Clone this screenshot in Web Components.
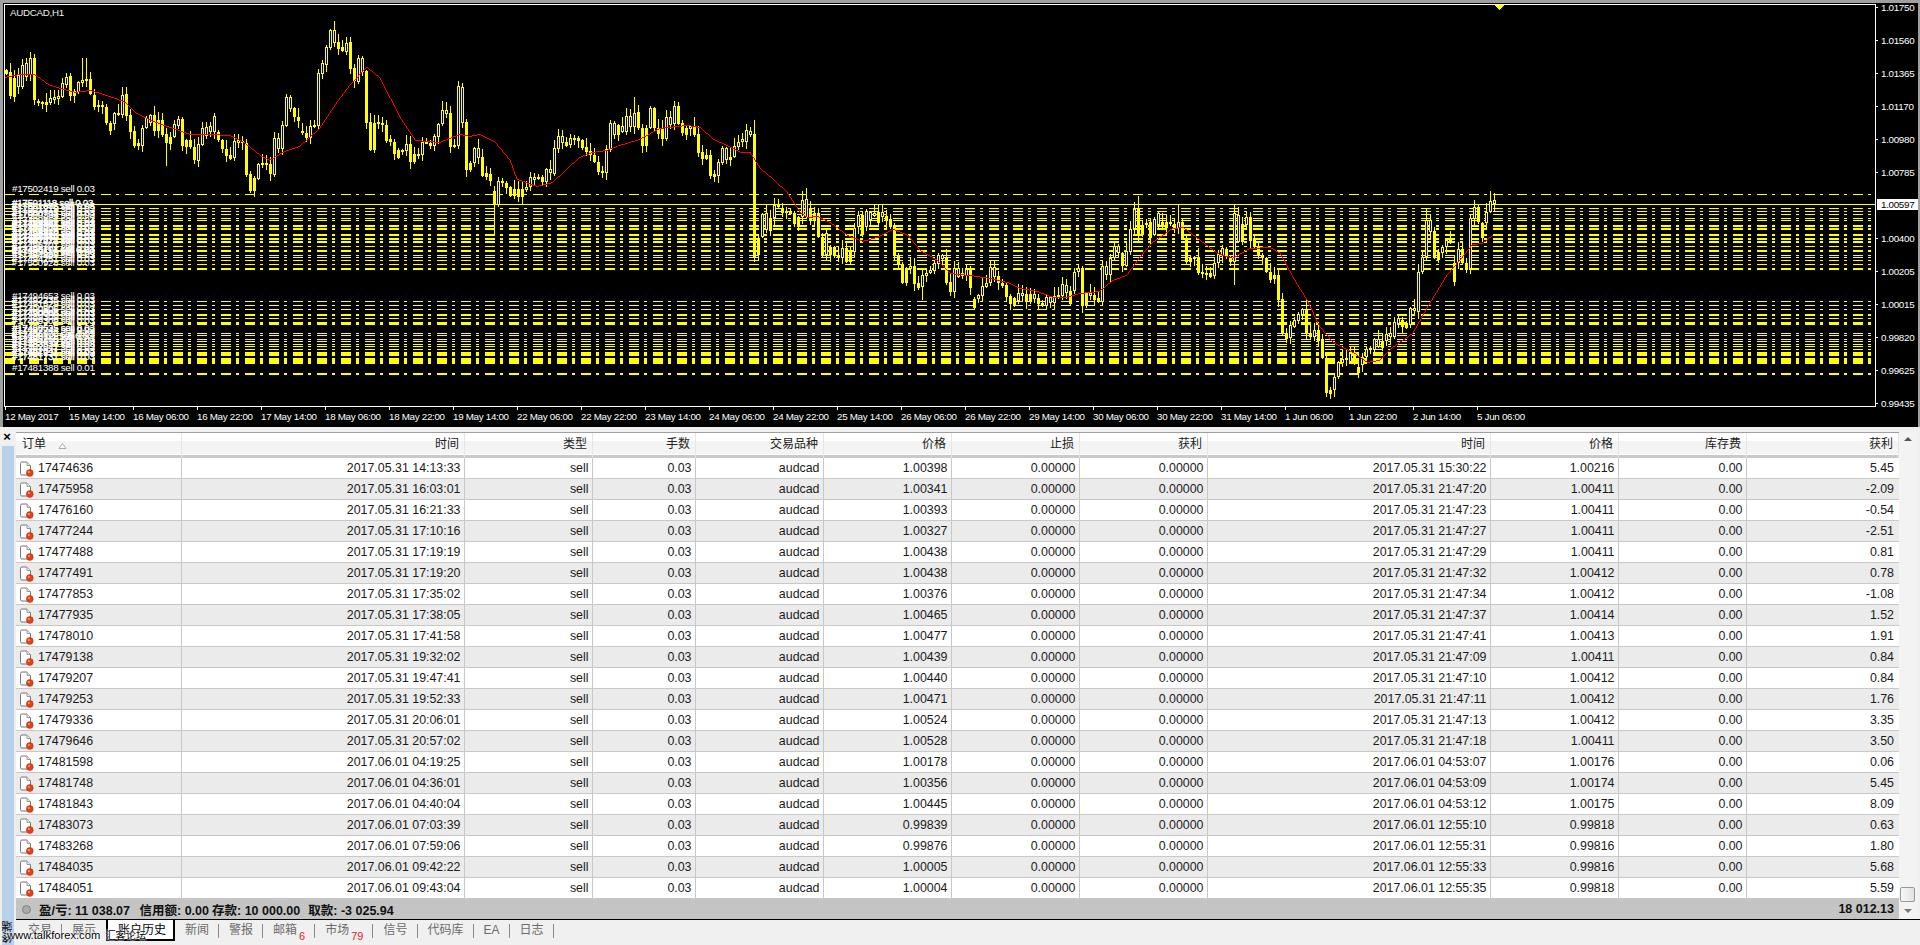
<!DOCTYPE html>
<html>
<head>
<meta charset="utf-8">
<title>AUDCAD,H1</title>
<style>
  html, body { margin: 0; padding: 0; background: #a0a0a0; overflow: hidden; }
  body { font-family: 'Liberation Sans', 'Noto Sans CJK SC', sans-serif; }
</style>
</head>
<body>
<mt-app>
  <mt-chart slot="chart"></mt-chart>
  <mt-terminal slot="terminal">
    <mt-history slot="table"></mt-history>
    <mt-tab slot="tabs" first>交易</mt-tab>
    <mt-tab slot="tabs" plain>展示</mt-tab>
    <mt-tab slot="tabs" active>账户历史</mt-tab>
    <mt-tab slot="tabs">新闻</mt-tab>
    <mt-tab slot="tabs">警报</mt-tab>
    <mt-tab slot="tabs" badge="6">邮箱</mt-tab>
    <mt-tab slot="tabs" badge="79">市场</mt-tab>
    <mt-tab slot="tabs">信号</mt-tab>
    <mt-tab slot="tabs">代码库</mt-tab>
    <mt-tab slot="tabs">EA</mt-tab>
    <mt-tab slot="tabs">日志</mt-tab>
  </mt-terminal>
</mt-app>

<script>
// Bars are read off the reference: top and bottom of each body, in pixels.
// Each block starts at a known x, bars are 4px apart, later blocks win.
const BAR_BLOCKS = [
  [6, `70 74 72 96 78 97 75 87 65 87 63 77 58 75 58 100 101 103 102 104 102 105 98 103 97 100 96 99 83 97 77 85
       76 96 91 96 82 92 80 83 79 81 79 94 95 107 105 107 105 107 107 123 123 131 113 124 113 115 95 115 94 116
       115 132 131 146 143 146`],
  [142, `128 146 118 128 115 123 115 131 120 131 120 135 134 143 137 144 124 137 119 126 119 146 140 147 140 147
       147 160 144 161 128 145 127 136 126 132 116 132 132 140 140 149 149 156 155 159 141 158 140 143 141 143
       143 175 174 191 178 191 164 179 163 165 163 165 164 174 138 175 138 149 125 149 97 126 97 109 108 117 117 121
       131 133 133 138 126 138 125 127 73 126 63 74 47 65 30 48 30 43 42 49 47 51 43 52 42 69 68 81 58 82 58 72
       71 123 122 150 123 150 122 124 123 125 125 141 139 142 142 154 150 158 150 152 144 151 144 162 154 162 154 155
       142 155 142 143 143 146 136 146 124 137 110 124 110 114 113 147 145 147 86 146 87 123`],
  [462, `87 123 122 170 163 170 148 163 148 158 157 176 173 177 174 181 191 204 181 205 181 183 183 188 187 196 189 196
       189 197 189 197 187 190 177 187 177 180 177 179 177 182 169 182 169 173 148 174 136 149 136 143 142 146 138 145
       138 140 138 141 140 148 147 152 151 155 155 162 162 172 171 173 149 173 123 150 123 135 125 135 126 132 116 132
       116 127 113 127 112 128 128 146 128 146 108 128 108 128 128 134 128 139 117 139 117 125 106 124 106 124 123 133
       128 135 126 129 126 135 134 153 152 159 155 159 155 176 174 177 162 176 148 163 148 160 157 160 146 157 142 147
       139 142 130 142 131 135 134 257 238 255 214 237 213 230 218 231 205 218 205 207 208 213 211 213 211 214 213 224
       217 226 200 217 199 217 208 221 213 221 213 237 237 255 233 255 247 255 247 256 255 258 248 258 248 262 252 262
       228 252 215 227 215 235 211 227 212 220 213 216 212 223 212 217 216 221 219 227 227 256 256 264 264 283 268 283
       266 269 266 284 283 288 275 288 272 274 270 273 264 270 255 265`],
  [922, `275 287 273 276 270 273 263 271 255 264 255 259 258 283 282 292 268 292 268 277 273 276 269 276 269 288 299 308
       295 299 286 296 283 287 267 283 267 277 276 283 283 286 285 297 296 304 298 306 293 301 293 296 294 302 294 302
       294 299 298 304 303 306 297 306 297 303 296 303 295 297 284 296 285 293 291 304 272 291 268 272 268 306 293 306
       293 296 295 300 298 302 266 302 266 275 258 275 246 258 246 253 253 266 251 266 229 252 209 229 208 235 225 235
       223 224 222 238 219 235 213 225 222 225 222 228 222 224 224 229 222 228 222 239 239 262 258 262 257 259 257 273
       272 274 273 274 273 277 263 276 254 263`],
  [1222, `248 256 249 257 257 262 213 262 215 242 224 242 217 225 217 241 239 247 246 255 255 258 258 272 272 280 275 279
       275 300 299 333 333 339 325 338 320 327 314 321 309 315 309 333 333 337 330 337 330 341 339 358 358 393 390 394
       377 390 362 377 359 363 358 360 353 362 353 362 367 373 357 365 349 357 348 350 339 350 339 347 341 348 334 341
       333 337 322 337 318 324 320 327 323 328 308 325 308 311 272 312 257 272 220 257 220 232 231 258 252 260 247 253
       240 247 240 242 263 282 249 263 249 263 263 270 218 269 207 219 207 222 223 238 212 223 201 212 200 204`]
];

// Long wicks that stand out in the reference, x: [top, bottom]
const WICKS = {
  34: [54, 105], 30: [52, 0], 82: [58, 0], 86: [58, 0], 166: [0, 166], 250: [0, 193], 284: [90, 0], 316: [0, 165],
  336: [28, 0], 340: [26, 0], 356: [47, 0], 364: [65, 0], 440: [79, 0], 460: [76, 0], 494: [0, 235], 634: [97, 0],
  642: [0, 153], 638: [105, 0], 754: [120, 262], 746: [124, 0], 806: [188, 0], 922: [0, 300], 1138: [196, 0],
  1178: [205, 0], 1234: [205, 285], 1326: [0, 397], 1426: [208, 0], 1474: [200, 0], 1490: [191, 0], 1494: [193, 212]
};

const MA_LINE = `5,77 20,74 34,74 40,78 48,84 60,88 75,92 90,90 100,93 115,98 125,102 135,112 150,120 170,127 190,134
  210,134 230,135 245,143 260,155 270,160 285,151 300,146 320,128 335,105 350,85 367,67 380,78 400,117 415,140 440,142
  460,134 470,136 480,134 495,142 510,160 517,179 537,186 553,182 567,169 580,157 593,152 607,150 620,145 640,139
  660,128 687,125 700,127 713,139 727,145 740,152 750,152 760,168 773,179 787,192 800,212 807,217 818,216 830,222
  847,235 863,241 877,237 893,229 908,235 920,250 937,260 950,273 970,275 990,278 1007,282 1020,288 1037,291 1053,297
  1067,297 1080,293 1100,291 1113,280 1127,275 1140,257 1153,242 1173,228 1183,227 1200,240 1217,253 1233,258 1250,248
  1270,247 1280,253 1293,277 1307,300 1320,327 1333,342 1353,352 1367,362 1380,360 1393,347 1413,333 1427,308 1447,275
  1460,260 1473,244 1483,243 1493,235`;

// Order lines: y, thickness
const LEVELS = [
  [194, 1], [208, 1], [211, 1], [214, 1], [218, 1], [220, 1], [225, 2], [228, 2], [234, 2], [238, 2], [241, 2], [246, 1],
  [250, 2], [255, 1], [257, 1], [260, 1], [264, 1], [268, 2], [301, 1], [305, 1], [309, 1], [314, 2], [318, 1], [322, 3],
  [333, 1], [335, 1], [339, 1], [341, 1], [344, 1], [346, 1], [349, 1], [352, 4], [358, 6], [373, 2]
];

const PRICE_TICKS = [
  [7, '1.01750'], [40, '1.01560'], [73, '1.01365'], [106, '1.01170'], [139, '1.00980'], [172, '1.00785'],
  [238, '1.00400'], [271, '1.00205'], [304, '1.00015'], [337, '0.99820'], [370, '0.99625'], [403, '0.99435']
];

const TIME_TICKS = ['12 May 2017', '15 May 14:00', '16 May 06:00', '16 May 22:00', '17 May 14:00', '18 May 06:00',
  '18 May 22:00', '19 May 14:00', '22 May 06:00', '22 May 22:00', '23 May 14:00', '24 May 06:00', '24 May 22:00',
  '25 May 14:00', '26 May 06:00', '26 May 22:00', '29 May 14:00', '30 May 06:00', '30 May 22:00', '31 May 14:00',
  '1 Jun 06:00', '1 Jun 22:00', '2 Jun 14:00', '5 Jun 06:00'];

const COLUMNS = [
  ['订单', 166], ['时间', 283], ['类型', 128], ['手数', 103], ['交易品种', 128], ['价格', 128], ['止损', 128], ['获利', 128],
  ['时间', 283], ['价格', 128], ['库存费', 128], ['获利', 152]
];

const TRADES = [
  ['17474636', '2017.05.31 14:13:33', '1.00398', '2017.05.31 15:30:22', '1.00216', '5.45'],
  ['17475958', '2017.05.31 16:03:01', '1.00341', '2017.05.31 21:47:20', '1.00411', '-2.09'],
  ['17476160', '2017.05.31 16:21:33', '1.00393', '2017.05.31 21:47:23', '1.00411', '-0.54'],
  ['17477244', '2017.05.31 17:10:16', '1.00327', '2017.05.31 21:47:27', '1.00411', '-2.51'],
  ['17477488', '2017.05.31 17:19:19', '1.00438', '2017.05.31 21:47:29', '1.00411', '0.81'],
  ['17477491', '2017.05.31 17:19:20', '1.00438', '2017.05.31 21:47:32', '1.00412', '0.78'],
  ['17477853', '2017.05.31 17:35:02', '1.00376', '2017.05.31 21:47:34', '1.00412', '-1.08'],
  ['17477935', '2017.05.31 17:38:05', '1.00465', '2017.05.31 21:47:37', '1.00414', '1.52'],
  ['17478010', '2017.05.31 17:41:58', '1.00477', '2017.05.31 21:47:41', '1.00413', '1.91'],
  ['17479138', '2017.05.31 19:32:02', '1.00439', '2017.05.31 21:47:09', '1.00411', '0.84'],
  ['17479207', '2017.05.31 19:47:41', '1.00440', '2017.05.31 21:47:10', '1.00412', '0.84'],
  ['17479253', '2017.05.31 19:52:33', '1.00471', '2017.05.31 21:47:11', '1.00412', '1.76'],
  ['17479336', '2017.05.31 20:06:01', '1.00524', '2017.05.31 21:47:13', '1.00412', '3.35'],
  ['17479646', '2017.05.31 20:57:02', '1.00528', '2017.05.31 21:47:18', '1.00411', '3.50'],
  ['17481598', '2017.06.01 04:19:25', '1.00178', '2017.06.01 04:53:07', '1.00176', '0.06'],
  ['17481748', '2017.06.01 04:36:01', '1.00356', '2017.06.01 04:53:09', '1.00174', '5.45'],
  ['17481843', '2017.06.01 04:40:04', '1.00445', '2017.06.01 04:53:12', '1.00175', '8.09'],
  ['17483073', '2017.06.01 07:03:39', '0.99839', '2017.06.01 12:55:10', '0.99818', '0.63'],
  ['17483268', '2017.06.01 07:59:06', '0.99876', '2017.06.01 12:55:31', '0.99816', '1.80'],
  ['17484035', '2017.06.01 09:42:22', '1.00005', '2017.06.01 12:55:33', '0.99816', '5.68'],
  ['17484051', '2017.06.01 09:43:04', '1.00004', '2017.06.01 12:55:35', '0.99818', '5.59']
];

const SANS = "'Liberation Sans', 'Noto Sans CJK SC', sans-serif";

function readBars() {
  const bars = new Map();
  for (const [start, text] of BAR_BLOCKS) {
    const nums = text.trim().split(/\s+/).map(Number);
    for (let i = 0; i * 2 < nums.length; i++) {
      bars.set(start + i * 4, [nums[i * 2], nums[i * 2 + 1]]);
    }
  }
  return [...bars.entries()].sort((a, b) => a[0] - b[0]);
}

// The moving average as a one pixel staircase, the way the terminal plots it
function stairPath(text) {
  const pts = text.trim().split(/\s+/).map(p => p.split(',').map(Number));
  const yAt = x => {
    for (let i = 1; i < pts.length; i++) {
      if (x <= pts[i][0]) {
        const [x0, y0] = pts[i - 1];
        const [x1, y1] = pts[i];
        return Math.round(y0 + (y1 - y0) * (x - x0) / (x1 - x0));
      }
    }
    return pts[pts.length - 1][1];
  };
  let d = '';
  for (let x = pts[0][0]; x < pts[pts.length - 1][0]; x++) {
    const a = yAt(x);
    const b = yAt(x + 1);
    const top = Math.min(a, b);
    const h = Math.max(Math.abs(b - a), 1);
    d += `M${x} ${top}h1v${h}h-1z`;
  }
  return d;
}

class MtApp extends HTMLElement {
  constructor() {
    super();
    this.attachShadow({ mode: 'open' });
    this.shadowRoot.innerHTML = `
      <style>
        :host {
          display: flex;
          flex-direction: column;
          position: relative;
          width: 1920px;
          height: 945px;
          overflow: hidden;
          background: #a0a0a0;
        }
        ::slotted([slot=chart]) { flex: none; }
        ::slotted([slot=terminal]) { flex: 1; min-height: 0; }
        .watermark {
          position: absolute;
          left: 7px;
          top: 928px;
          font: 11.2px/14px ${SANS};
          color: #000;
          white-space: nowrap;
          text-shadow: 0 0 2px #fff, 0 0 2px #fff, 0 0 2px #fff;
        }
        .watermark span { font-size: 10.2px; margin-left: 2px; }
      </style>
      <slot name="chart"></slot>
      <slot name="terminal"></slot>
      <div class="watermark">www.talkforex.com <span>汇客论坛</span></div>
    `;
  }
}

class MtChart extends HTMLElement {
  constructor() {
    super();
    this.attachShadow({ mode: 'open' });
  }

  connectedCallback() {
    const yellow = '#ffff00';
    const parts = [];

    // order lines go under the candles
    for (const [y, h] of LEVELS) {
      parts.push(`<line x1="5" x2="1875" y1="${y + h / 2}" y2="${y + h / 2}" stroke="${yellow}" stroke-width="${h}" stroke-dasharray="10 5 3 6"/>`);
    }
    parts.push(`<rect x="5" y="204" width="1870" height="1" fill="${yellow}"/>`);

    const bars = readBars();
    bars.forEach(([x, [top, bottom]], i) => {
      const wick = WICKS[x] || [0, 0];
      const up = top - 1 - (i * 7919) % 9;
      const down = bottom + 1 + (i * 104729) % 7;
      const wickTop = wick[0] || up;
      const wickBottom = wick[1] || down;
      parts.push(`<rect x="${x}" y="${wickTop}" width="1" height="${wickBottom - wickTop}" fill="${yellow}"/>`);
      parts.push(`<rect x="${x - 1}" y="${top}" width="3" height="${Math.max(bottom - top, 2)}" fill="${yellow}"/>`);
      const prev = i ? bars[i - 1][1] : [top, bottom];
      const rising = top + bottom < prev[0] + prev[1];
      if (rising && bottom - top > 2) {
        parts.push(`<rect x="${x}" y="${top + 1}" width="1" height="${bottom - top - 2}" fill="#000"/>`);
      }
    });

    parts.push(`<path d="${stairPath(MA_LINE)}" fill="#ff0000"/>`);
    parts.push(`<polygon points="1494,5 1504,5 1499,10" fill="${yellow}"/>`);

    // order labels pile up at the left of the chart
    let ticket = 17502419;
    LEVELS.forEach(([y, h], i) => {
      let name = `#${ticket} sell 0.03`;
      if (i === 1) name = '#17501118 sell 0.03';
      if (y === 268) name = '#17500928 sell 0.03';
      if (y === 301) name = '#17494653 sell 0.03';
      if (y === 373) name = '#17481388 sell 0.01';
      const clear = i === 0 || y === 268 || y === 301 || y === 373;
      const weight = clear ? '' : 'stroke="#fff" stroke-width=".35"';
      parts.push(`<text class="t" x="12" y="${y - 2}" fill="#fff" ${weight}>${name}</text>`);
      if (h > 1 && !clear) parts.push(`<text class="t" x="12" y="${y + 2}" fill="#fff" stroke="#fff" stroke-width=".35">${name}</text>`);
      ticket -= 383 + i * 17;
    });

    // frame and axes
    parts.push(`<rect x="4" y="4" width="1871" height="1" fill="#fff"/>`);
    parts.push(`<rect x="4" y="4" width="1" height="403" fill="#fff"/>`);
    parts.push(`<rect x="1875" y="4" width="1" height="403" fill="#fff"/>`);
    parts.push(`<rect x="4" y="406" width="1872" height="1" fill="#fff"/>`);

    for (const [y, label] of PRICE_TICKS) {
      parts.push(`<rect x="1875" y="${y}" width="3" height="1" fill="#fff"/>`);
      parts.push(`<text class="t" x="1881" y="${y + 3.5}" fill="#fff">${label}</text>`);
    }
    parts.push(`<rect x="1877" y="199" width="41" height="11" fill="#fff"/>`);
    parts.push(`<text class="t" x="1881" y="208" fill="#000">1.00597</text>`);

    TIME_TICKS.forEach((label, i) => {
      const x = 5 + i * 64;
      parts.push(`<rect x="${x}" y="406" width="1" height="4" fill="#fff"/>`);
      parts.push(`<text class="t" x="${x}" y="419.5" fill="#fff">${label}</text>`);
    });

    parts.push(`<text class="t" x="10" y="16" fill="#eee">AUDCAD,H1</text>`);

    this.shadowRoot.innerHTML = `
      <style>
        :host { display: block; height: 424px; margin: 3px 2px 0 3px; background: #000; }
        svg { display: block; }
        .grid { shape-rendering: crispEdges; }
        .t { font: 9.8px ${SANS}; letter-spacing: -.3px; }
      </style>
      <svg width="1915" height="424" viewBox="3 3 1915 424" xmlns="http://www.w3.org/2000/svg">
        <g class="grid">${parts.join('')}</g>
      </svg>
    `;
  }
}

class MtTerminal extends HTMLElement {
  constructor() {
    super();
    this.attachShadow({ mode: 'open' });
    this.shadowRoot.innerHTML = `
      <style>
        :host {
          display: flex;
          background: #f0f0f0;
          color: #000;
          font: 12.4px ${SANS};
        }
        .side { flex: none; width: 16px; display: flex; flex-direction: column; }
        .close { height: 19px; padding-top: 2px; box-sizing: border-box; text-align: center; font: bold 13px/16px ${SANS}; width: 14px; }
        .band {
          flex: 1;
          margin: 0 2px 0 2px;
          background: #b8d0ea;
          display: flex;
          flex-direction: column;
          justify-content: flex-end;
          align-items: center;
        }
        .band span {
          writing-mode: vertical-rl;
          transform: rotate(180deg);
          font-size: 11px;
          line-height: 11px;
          margin-bottom: 2px;
        }
        .main { flex: 1; min-width: 0; display: flex; flex-direction: column; }
        .upper { display: flex; height: 492px; padding-top: 5px; box-sizing: border-box; }
        .tabs { flex: 1; display: flex; border-top: 1px solid #000; align-items: flex-start; }
        ::slotted(mt-history) { flex: none; width: 1883px; }
        .scroll { flex: none; width: 19px; position: relative; background: #f3f3f3; margin-right: 2px; }
        .arrow { position: absolute; left: 5px; width: 0; height: 0; border: 4px solid transparent; }
        .arrow.up { top: 5px; border-bottom-color: #555; border-top-width: 0; }
        .arrow.down { top: 477px; border-top-color: #777; border-bottom-width: 0; }
        .thumb {
          position: absolute;
          left: 1px;
          top: 455px;
          width: 13px;
          height: 13px;
          border: 1px solid #9a9a9a;
          border-radius: 2px;
          background: linear-gradient(90deg, #f8f8f8, #e2e2e2);
        }
      </style>
      <div class="side">
        <div class="close">×</div>
        <div class="band"><span>终端</span></div>
      </div>
      <div class="main">
        <div class="upper">
          <slot name="table"></slot>
          <div class="scroll">
            <div class="arrow up"></div>
            <div class="thumb"></div>
            <div class="arrow down"></div>
          </div>
        </div>
        <div class="tabs"><slot name="tabs"></slot></div>
      </div>
    `;
  }
}

class MtHistory extends HTMLElement {
  constructor() {
    super();
    this.attachShadow({ mode: 'open' });
  }

  connectedCallback() {
    const icon = `
      <svg class="icon" width="15" height="16" viewBox="0 0 15 16">
        <path d="M1.5 2.5q0-1.5 1.5-1.5h5l3.5 3.5v8q0 1.5-1.5 1.5h-7q-1.5 0-1.5-1.5z" fill="#fff" stroke="#777"/>
        <path d="M8 1v3.5h3.5" fill="#eee" stroke="#999"/>
        <circle cx="10.8" cy="12" r="3.4" fill="#e4401a" stroke="#b83210" stroke-width=".6"/>
        <circle cx="9.9" cy="11" r="1.1" fill="#ff9a66"/>
      </svg>`;
    const head = COLUMNS.map(([label], i) => {
      if (i === 0) {
        return `<div class="h first">${label}<svg class="sort" width="9" height="6" viewBox="0 0 9 6"><path d="M4.5.5L8 5.5H1z" fill="#fff" stroke="#aaa"/></svg></div>`;
      }
      return `<div class="h">${label}</div>`;
    }).join('');
    const rows = TRADES.map((t, i) => `
      <div class="row ${i % 2 ? 'odd' : ''}">
        <div class="c id">${icon}${t[0]}</div>
        <div class="c">${t[1]}</div>
        <div class="c">sell</div>
        <div class="c">0.03</div>
        <div class="c">audcad</div>
        <div class="c">${t[2]}</div>
        <div class="c">0.00000</div>
        <div class="c">0.00000</div>
        <div class="c">${t[3]}</div>
        <div class="c">${t[4]}</div>
        <div class="c">0.00</div>
        <div class="c last">${t[5]}</div>
      </div>`).join('');
    const template = COLUMNS.map(c => c[1] + 'px').join(' ');

    this.shadowRoot.innerHTML = `
      <style>
        :host { display: block; color: #1a1a1a; font: 12.4px ${SANS}; }
        .head, .row { display: grid; grid-template-columns: ${template}; }
        .head { height: 25px; border-top: 1px solid #a0a0a0; box-sizing: content-box; margin-left: 0; }
        .h {
          box-sizing: border-box;
          height: 25px;
          padding-right: 5px;
          text-align: right;
          font-size: 12px;
          line-height: 23px;
          color: #222;
          background: linear-gradient(#fff 0 8px, #f4f4f4 8px 21px, #fff 21px 22px, #c9c9c9 22px 25px);
          border-right: 1px solid #e6e6e6;
        }
        .h.first { text-align: left; padding-left: 6px; display: flex; align-items: flex-start; }
        .sort { margin: 10px 0 0 12px; }
        .row { height: 21px; background: #fff; }
        .row.odd { background: #ebebeb; }
        .c {
          box-sizing: border-box;
          height: 21px;
          line-height: 20px;
          text-align: right;
          padding-right: 3.5px;
          border-right: 1px solid #c8c8c8;
          border-bottom: 1px solid #c8c8c8;
          white-space: nowrap;
        }
        .c.last { padding-right: 5px; border-right: 0; }
        .id { display: flex; align-items: center; padding-left: 3px; text-align: left; border-left: 0; }
        .icon { flex: none; margin-right: 4px; margin-top: 1px; }
        .total {
          display: flex;
          align-items: center;
          height: 20px;
          background: #c4c4c4;
          font-weight: bold;
          font-size: 12.5px;
          color: #111;
          padding: 0 5px 0 6px;
        }
        .dot { width: 7px; height: 7px; border-radius: 50%; background: #aaa; border: 1px solid #808080; margin-right: 8px; flex: none; }
        .total span { margin-right: 8px; }
        .total span:first-of-type { margin-right: 9.5px; }
        .total span:nth-of-type(2) { margin-right: 3px; }
        .total .sum { margin: 0 0 0 auto; }
      </style>
      <div class="head">${head}</div>
      ${rows}
      <div class="total">
        <div class="dot"></div>
        <span>盈/亏: 11 038.07</span>
        <span>信用额: 0.00</span>
        <span>存款: 10 000.00</span>
        <span>取款: -3 025.94</span>
        <span class="sum">18 012.13</span>
      </div>
    `;
  }
}

class MtTab extends HTMLElement {
  constructor() {
    super();
    this.attachShadow({ mode: 'open' });
  }

  connectedCallback() {
    const badge = this.getAttribute('badge');
    this.shadowRoot.innerHTML = `
      <style>
        :host {
          display: flex;
          height: 21px;
          padding-left: 10px;
          color: #6c6c6c;
          font: 12px/21px ${SANS};
          position: relative;
        }
        :host([first]) { padding-left: 12px; }
        :host([active]) {
          background: #fff;
          color: #000;
          box-sizing: border-box;
          margin-right: 0;
          border: solid #000;
          border-width: 0 2px 2px 2px;
        }
        .badge { color: #e8202a; font-size: 11px; line-height: 13px; margin: 10px 0 0 2px; }
        .sep { width: 1px; height: 14px; margin: 4px 0 0 9px; background: #8a8a8a; }
        :host([active]) .sep, :host([plain]) .sep { background: transparent; }
        :host([active]) .sep { margin-left: 7px; width: 0; }
      </style>
      <slot></slot>${badge ? `<span class="badge">${badge}</span>` : ''}<div class="sep"></div>
    `;
  }
}

customElements.define('mt-app', MtApp);
customElements.define('mt-chart', MtChart);
customElements.define('mt-terminal', MtTerminal);
customElements.define('mt-history', MtHistory);
customElements.define('mt-tab', MtTab);
</script>
</body>
</html>
